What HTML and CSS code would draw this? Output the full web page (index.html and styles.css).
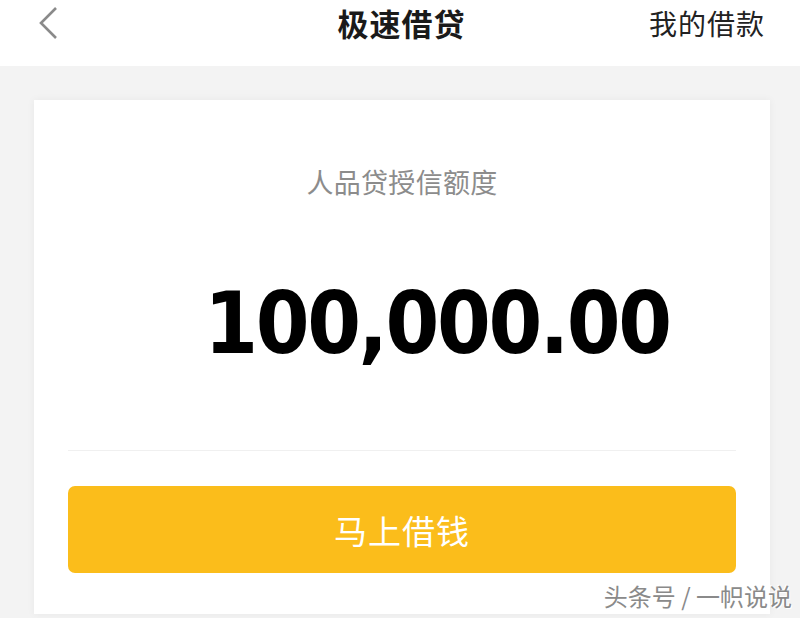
FILE: index.html
```html
<!DOCTYPE html>
<html lang="zh">
<head>
<meta charset="utf-8">
<title>极速借贷</title>
<link rel="stylesheet" href="styles.css">
</head>
<body>
<div class="page">
  <header class="topbar">
    <span class="back">
      <svg width="24" height="34" viewBox="0 0 24 34"><polyline points="18,2 3,17 18,32" fill="none" stroke="#8a8a8a" stroke-width="2.6"/></svg>
    </span>
    <h1 class="title">极速借贷</h1>
    <span class="mine">我的借款</span>
  </header>
  <main class="content">
    <section class="card">
      <div class="label">人品贷授信额度</div>
      <div class="amount">100,000.00</div>
      <div class="divider"></div>
      <div class="btn">马上借钱</div>
      <div class="mark">头条号 / 一帜说说</div>
    </section>
  </main>
</div>
</body>
</html>
```

FILE: styles.css
```css
* { box-sizing: border-box; }
html, body { margin: 0; padding: 0; }
body {
  width: 800px;
  height: 618px;
  overflow: hidden;
  background: #f3f3f3;
  font-family: "Noto Sans CJK SC", "Noto Sans", sans-serif;
}
.page { width: 800px; height: 618px; display: flex; flex-direction: column; }
.topbar {
  height: 66px;
  background: #fff;
  display: grid;
  grid-template-columns: 1fr auto 1fr;
  align-items: start;
  padding: 0 35px 0 38px;
  flex-shrink: 0;
}
.back { justify-self: start; padding-top: 6px; display: flex; }
.title {
  margin: 0;
  font-size: 31px;
  font-weight: 700;
  color: #1a1a1a;
  line-height: 46px;
  letter-spacing: 1px;
}
.mine {
  justify-self: end;
  font-size: 28px;
  color: #222;
  line-height: 46px;
  letter-spacing: 1px;
}
.content { flex: 1; padding: 34px 30px 0 34px; }
.card {
  background: #fff;
  height: 514px;
  box-shadow: 0 0 8px rgba(0,0,0,0.05);
  padding: 0 34px;
  display: flex;
  flex-direction: column;
  position: relative;
}
.label {
  margin-top: 64px;
  text-align: center;
  font-size: 27px;
  color: #8c8c8c;
  line-height: 36px;
  letter-spacing: 0.3px;
}
.amount {
  margin-top: 71px;
  text-align: center;
  font-family: "DejaVu Sans Condensed", "DejaVu Sans", sans-serif;
  font-weight: 700;
  font-size: 86px;
  letter-spacing: -2.4px;
  line-height: 104px;
  color: #000;
  padding-left: 70px;
}
.divider { margin-top: 75px; height: 1px; background: #f0f0f0; }
.btn {
  margin-top: 35px;
  height: 87px;
  background: #fbbd1b;
  border-radius: 7px;
  color: #fff;
  font-size: 33px;
  display: flex;
  align-items: center;
  justify-content: center;
  letter-spacing: 1px;
}
.mark {
  position: absolute;
  right: -22px;
  bottom: 2px;
  font-size: 24px;
  color: #8a8a8a;
  text-shadow: 1px 1px 0 #fff, -1px -1px 0 #fff;
  line-height: 32px;
}
```
